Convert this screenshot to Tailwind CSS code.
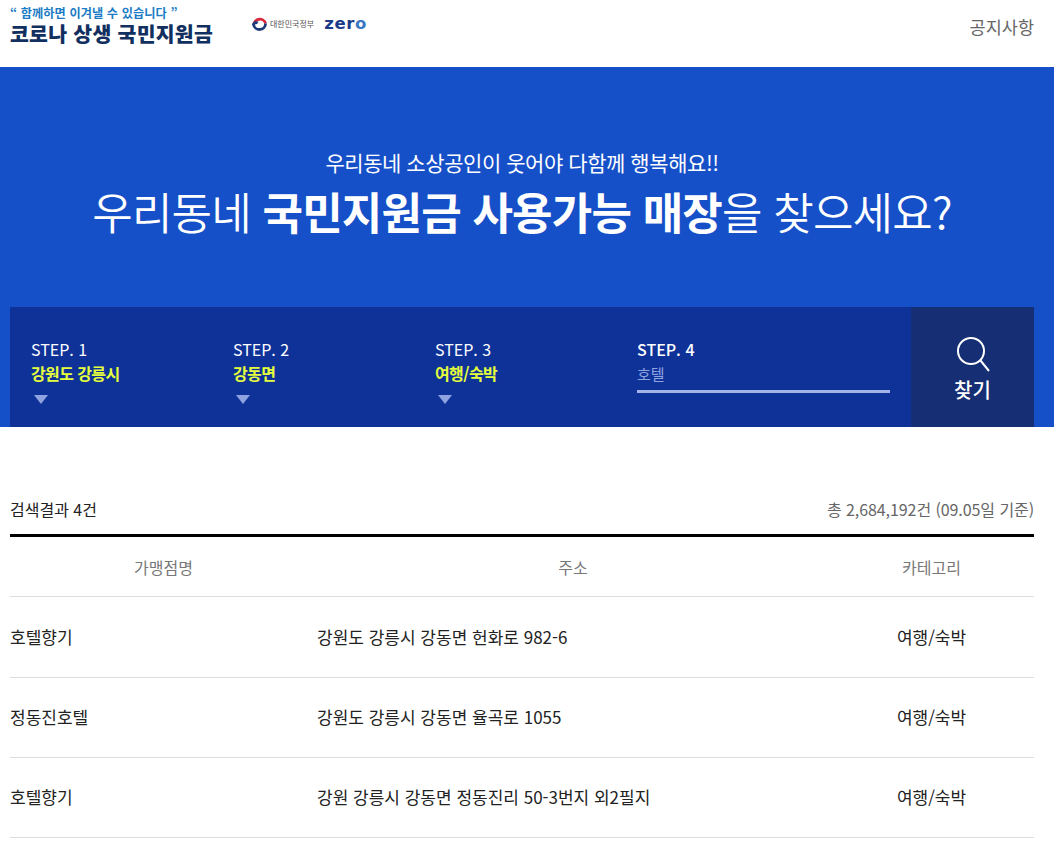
<!DOCTYPE html>
<html lang="ko">
<head>
    <meta charset="UTF-8">
    <title>코로나 상생 국민지원금</title>
    <script src="https://cdn.jsdelivr.net/npm/@tailwindcss/browser@4"></script>
</head>
<body class="bg-white font-['Noto_Sans_CJK_KR','Noto_Sans',sans-serif] overflow-hidden h-[842px]">

    <!-- header -->
    <header class="h-[67px] pl-[10px] pr-[20px] flex items-start justify-between">
        <div class="flex items-start">
            <div class="w-[204px] pt-[6px]">
                <div class="text-[12.200px] leading-[14px] font-bold text-[#1a7cc4] tracking-[0.1px] whitespace-nowrap">“ 함께하면 이겨낼 수 있습니다 ”</div>
                <div class="text-[20.500px] leading-[27px] font-black text-[#12305f] tracking-[0.25px] whitespace-nowrap">코로나 상생 국민지원금</div>
            </div>
            <div class="flex items-center ml-[38px] mt-[16px]">
                <svg width="15" height="15" viewBox="0 0 16 16" fill="none" stroke-width="3">
                    <path d="M1.800 9.500A6.500 6.500 0 0 1 14.500 8" stroke="#d8283c"/>
                    <path d="M14.500 8A6.500 6.500 0 0 1 1.600 9c1-2 3-2.500 4.500-1.500" stroke="#1c3a7a"/>
                </svg>
                <span class="ml-[3px] text-[8px] text-[#555] whitespace-nowrap">대한민국정부</span>
                <span class="ml-[10px] text-[16.500px] leading-[15px] font-black text-[#1c3a8a] font-['DejaVu_Sans',sans-serif] tracking-[0.6px]">zer<span class="text-[#3b78c4]">o</span></span>
            </div>
        </div>
        <a class="mt-[16px] text-[17.500px] leading-[22px] text-[#666]">공지사항</a>
    </header>

    <!-- hero -->
    <section class="h-[360px] bg-[#1650c8] pl-[10px] pr-[20px] flex flex-col">
        <div class="h-[240px] text-white text-center">
            <p class="pt-[82px] text-[21px] leading-[30px] tracking-[-0.44px] -mt-[2px]">우리동네 소상공인이 웃어야 다함께 행복해요!!</p>
            <h1 class="mt-[6px] text-[44px] leading-[56px] font-[350] tracking-[-0.8px]">우리동네 <b class="font-bold">국민지원금 사용가능 매장</b>을 찾으세요?</h1>
        </div>
        <div class="h-[120px] bg-[#0e3298] flex text-white">
            <div class="flex-1 pl-[21px] pt-[32px] grid grid-cols-[202px_202px_202px_1fr]">
                <div>
                    <div class="text-[16px] leading-[20px]">STEP. 1</div>
                    <div class="mt-[1px] text-[16px] leading-[27px] font-bold text-[#e6ff3c] tracking-[-0.6px]">강원도 강릉시</div>
                    <div class="ml-[3px] mt-[8px] w-0 h-0 border-x-[7px] border-x-transparent border-t-[9px] border-t-[#8fa3e0]"></div>
                </div>
                <div>
                    <div class="text-[16px] leading-[20px]">STEP. 2</div>
                    <div class="mt-[1px] text-[16px] leading-[27px] font-bold text-[#e6ff3c] tracking-[-0.6px]">강동면</div>
                    <div class="ml-[3px] mt-[8px] w-0 h-0 border-x-[7px] border-x-transparent border-t-[9px] border-t-[#8fa3e0]"></div>
                </div>
                <div>
                    <div class="text-[16px] leading-[20px]">STEP. 3</div>
                    <div class="mt-[1px] text-[16px] leading-[27px] font-bold text-[#e6ff3c] tracking-[-0.6px]">여행/숙박</div>
                    <div class="ml-[3px] mt-[8px] w-0 h-0 border-x-[7px] border-x-transparent border-t-[9px] border-t-[#8fa3e0]"></div>
                </div>
                <div class="w-[253px]">
                    <div class="text-[16px] leading-[20px] font-medium">STEP. 4</div>
                    <div class="mt-[1px] text-[15px] leading-[27px] text-[#8fa3e0] border-b-[3px] border-[#a3b4ea] h-[33px]">호텔</div>
                </div>
            </div>
            <button class="w-[123px] bg-[#152e74] flex flex-col items-center pt-[29px]">
                <svg width="34" height="36" viewBox="0 0 34 36" fill="none" stroke="#fff" stroke-width="2">
                    <circle cx="15" cy="15" r="13"/>
                    <path d="M24.500 24.500 33 35"/>
                </svg>
                <span class="mt-[4px] text-[20px] leading-[28px] font-medium">찾기</span>
            </button>
        </div>
    </section>

    <!-- results -->
    <main class="pl-[10px] pr-[20px]">
        <div class="h-[110px] pt-[70px] flex justify-between items-start border-b-[3px] border-black">
            <span class="text-[16px] leading-[24px] text-[#222]">검색결과 4건</span>
            <span class="text-[16px] leading-[24px] text-[#666] tracking-[-0.08px]">총 2,684,192건 (09.05일 기준)</span>
        </div>
        <table class="w-full table-fixed">
            <thead>
                <tr class="h-[59px] border-b border-[#ddd] text-[16px] text-[#777]">
                    <th class="w-[307px] font-normal pt-[2px]">가맹점명</th>
                    <th class="w-[512px] font-normal pt-[2px]">주소</th>
                    <th class="font-normal pt-[2px]">카테고리</th>
                </tr>
            </thead>
            <tbody class="text-[17px] text-[#222]">
                <tr class="h-[81px] border-b border-[#ddd]">
                    <td>호텔향기</td>
                    <td>강원도 강릉시 강동면 헌화로 982-6</td>
                    <td class="text-center">여행/숙박</td>
                </tr>
                <tr class="h-[80px] border-b border-[#ddd]">
                    <td>정동진호텔</td>
                    <td>강원도 강릉시 강동면 율곡로 1055</td>
                    <td class="text-center">여행/숙박</td>
                </tr>
                <tr class="h-[80px] border-b border-[#ddd]">
                    <td>호텔향기</td>
                    <td>강원 강릉시 강동면 정동진리 50-3번지 외2필지</td>
                    <td class="text-center">여행/숙박</td>
                </tr>
            </tbody>
        </table>
    </main>

</body>
</html>
